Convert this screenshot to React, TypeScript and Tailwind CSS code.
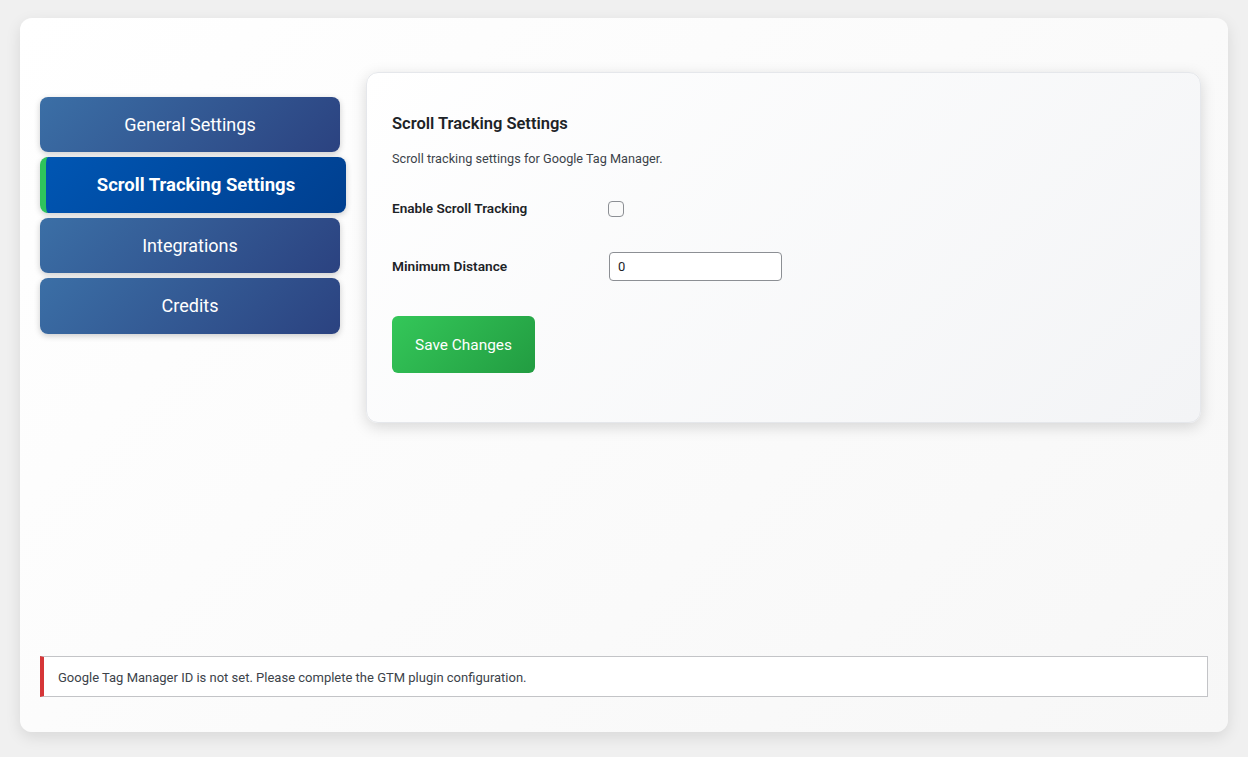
export default function App() {
  const nav = "flex w-[300px] items-center justify-center rounded-lg bg-[linear-gradient(135deg,#3b6fa6,#2b4280)] text-[18px] text-white shadow-[0_2px_6px_rgba(0,0,0,0.2)]";
  return (
    <div className="flex h-[757px] w-full flex-col bg-[#f0f0f0] px-5 pb-[25px] pt-[18px] font-['Roboto','Open_Sans',sans-serif] text-[13px] text-[#1d2327]">
      <div className="flex flex-1 flex-col justify-between rounded-xl bg-[linear-gradient(135deg,#ffffff,#f7f7f7)] pb-[35px] pl-5 pr-5 pt-[54px] shadow-[0_5px_15px_rgba(0,0,0,0.1)]">
        <div className="flex gap-5">
          <nav className="flex w-[306px] flex-col gap-[5px] pt-[25px]">
            <div className={`${nav} h-[55px]`}>General Settings</div>
            <div className="flex h-[56px] w-[306px] items-center justify-center rounded-lg border-l-[6px] border-[#2fc45c] bg-[linear-gradient(135deg,#0056b3,#003f8f)] pt-[2px] text-[18.5px] font-bold text-white shadow-[0_2px_6px_rgba(0,0,0,0.2)]">Scroll Tracking Settings</div>
            <div className={`${nav} h-[55px]`}>Integrations</div>
            <div className={`${nav} h-[56px] pb-px`}>Credits</div>
          </nav>
          <main className="h-[351px] w-[835px] rounded-xl border border-[#e5e7eb] bg-[linear-gradient(135deg,#ffffff,#f3f4f6)] pl-[25px] pr-6 pt-[37px] shadow-[0_4px_15px_rgba(0,0,0,0.15)]">
            <h2 className="pt-px text-[16.5px] font-semibold leading-[26px]">Scroll Tracking Settings</h2>
            <p className="mt-[13px] text-[12.7px] leading-[18px] text-[#3c434a]">Scroll tracking settings for Google Tag Manager.</p>
            <div className="mt-[29px] flex h-[24px] items-center">
              <label className="w-[216px] pb-[2px] text-[13.6px] font-semibold">Enable Scroll Tracking</label>
              <span className="h-4 w-4 rounded-[4px] border border-[#8c8f94] bg-[#fafafa]" />
            </div>
            <div className="mt-[31px] flex h-[29px] items-center">
              <label className="w-[217px] pb-px text-[13.7px] font-semibold">Minimum Distance</label>
              <input readOnly value="0" className="h-[29px] w-[173px] rounded border border-[#8c8f94] bg-white px-2 text-[13px] outline-none" />
            </div>
            <button className="mt-[35px] h-[57px] w-[143px] rounded-md bg-[linear-gradient(135deg,#34c759,#229c41)] pt-[3px] text-[15.4px] text-white">Save Changes</button>
          </main>
        </div>
        <div className="flex h-[41px] w-[1168px] items-center border border-[#c3c4c7] border-l-[4px] border-l-[#d63638] bg-white pl-[14px] pt-[2px] text-[13px] text-[#3c434a]">Google Tag Manager ID is not set. Please complete the GTM plugin configuration.</div>
      </div>
    </div>
  );
}
